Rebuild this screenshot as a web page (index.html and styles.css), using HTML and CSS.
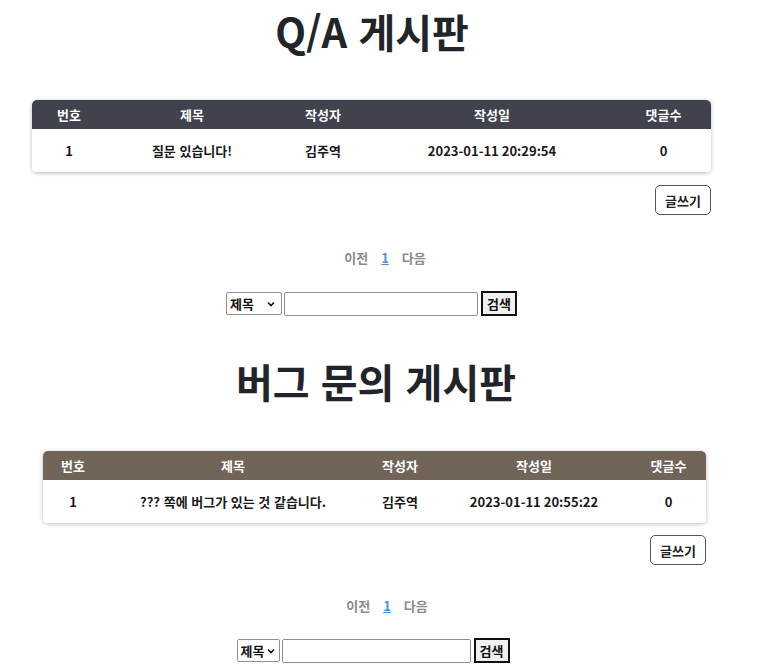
FILE: index.html
```html
<!DOCTYPE html>
<html lang="ko">
<head>
<meta charset="utf-8">
<title>게시판</title>
<link rel="stylesheet" href="styles.css">
</head>
<body>
<section class="board board-qa">
  <h1 class="board-title">Q/A 게시판</h1>
  <div class="board-body">
    <table class="board-table">
      <thead>
        <tr>
          <th class="c-no">번호</th>
          <th class="c-title">제목</th>
          <th class="c-writer">작성자</th>
          <th class="c-date">작성일</th>
          <th class="c-count">댓글수</th>
        </tr>
      </thead>
      <tbody>
        <tr>
          <td>1</td>
          <td>질문 있습니다!</td>
          <td>김주역</td>
          <td class="date">2023-01-11 20:29:54</td>
          <td>0</td>
        </tr>
      </tbody>
    </table>
    <div class="write-row"><button class="write-btn" type="button">글쓰기</button></div>
  </div>
  <nav class="pager"><span>이전</span><a href="#">1</a><span>다음</span></nav>
  <form class="search">
    <select class="search-select"><option>제목</option><option>작성자</option></select>
    <input class="search-input" type="text">
    <button class="search-btn" type="button">검색</button>
  </form>
</section>

<section class="board board-bug">
  <h1 class="board-title">버그 문의 게시판</h1>
  <div class="board-body">
    <table class="board-table">
      <thead>
        <tr>
          <th class="c-no">번호</th>
          <th class="c-title">제목</th>
          <th class="c-writer">작성자</th>
          <th class="c-date">작성일</th>
          <th class="c-count">댓글수</th>
        </tr>
      </thead>
      <tbody>
        <tr>
          <td>1</td>
          <td>??? 쪽에 버그가 있는 것 같습니다.</td>
          <td>김주역</td>
          <td class="date">2023-01-11 20:55:22</td>
          <td>0</td>
        </tr>
      </tbody>
    </table>
    <div class="write-row"><button class="write-btn" type="button">글쓰기</button></div>
  </div>
  <nav class="pager"><span>이전</span><a href="#">1</a><span>다음</span></nav>
  <form class="search">
    <select class="search-select"><option>제목</option></select>
    <input class="search-input" type="text">
    <button class="search-btn" type="button">검색</button>
  </form>
</section>
</body>
</html>
```
FILE: styles.css
```css
html, body {
  margin: 0;
  padding: 0;
  background: #ffffff;
}
body {
  width: 746px;
  font-family: "Noto Sans CJK KR", "Noto Sans", sans-serif;
  color: #212121;
}
.board {
  display: flex;
  flex-direction: column;
  height: 350px;
}
.board-title {
  margin: 0;
  font-size: 40px;
  font-weight: 700;
  line-height: 63px;
  text-align: center;
  color: #212529;
}
.board-qa .board-title { padding-right: 2px; }
.board-bug .board-title { padding-left: 6px; }
.board-body {
  display: flex;
  flex-direction: column;
  margin-top: 37px;
}
.board-qa .board-body { width: 679px; margin-left: 32px; }
.board-bug .board-body { width: 663px; margin-left: 43px; margin-top: 38px; }

.board-table {
  width: 100%;
  border-collapse: separate;
  border-spacing: 0;
  table-layout: fixed;
  border-radius: 5px;
  box-shadow: 0 1px 4px rgba(0, 0, 0, 0.28);
  font-size: 13px;
  font-weight: 700;
  text-align: center;
}
.board-table th {
  height: 29px;
  padding: 0;
  color: #ffffff;
  font-weight: 700;
}
.board-table th:first-child { border-top-left-radius: 5px; }
.board-table th:last-child { border-top-right-radius: 5px; }
.board-qa .board-table th { background: #40424c; }
.board-bug .board-table th { background: #716559; }
.board-table td {
  height: 43px;
  padding: 0;
  background: #ffffff;
  color: #1a1a1a;
}
.date {
  font-variant-east-asian: proportional-width;
  font-feature-settings: "locl" 0;
}
.board-table tbody tr:last-child td:first-child { border-bottom-left-radius: 4px; }
.board-table tbody tr:last-child td:last-child { border-bottom-right-radius: 4px; }

.board-qa .c-no { width: 74px; }
.board-qa .c-title { width: 172px; }
.board-qa .c-writer { width: 90px; }
.board-qa .c-date { width: 248px; }
.board-bug .c-no { width: 60px; }
.board-bug .c-title { width: 260px; }
.board-bug .c-writer { width: 74px; }
.board-bug .c-date { width: 194px; }

.write-row {
  display: flex;
  justify-content: flex-end;
  margin-top: 13px;
}
.board-bug .write-row { margin-top: 12px; }
.write-btn {
  width: 56px;
  height: 30px;
  padding: 0;
  background: #ffffff;
  border: 1px solid #555555;
  border-radius: 5px;
  font-family: "Noto Sans CJK KR", sans-serif;
  font-size: 13px;
  font-weight: 700;
  color: #222222;
}

.pager {
  display: flex;
  justify-content: center;
  gap: 13px;
  margin-top: 33px;
  padding-left: 24px;
  font-size: 13px;
  font-weight: 700;
  line-height: 19px;
  color: #8a8a8a;
}
.board-bug .pager { padding-left: 28px; margin-top: 31px; }
.pager a {
  color: #4f8ee0;
  text-decoration: underline;
}

.search {
  display: flex;
  justify-content: center;
  align-items: center;
  margin-top: 24px;
  padding-right: 3px;
}
.board-bug .search { padding-right: 0; margin-top: 23px; }
.search-select {
  appearance: none;
  -webkit-appearance: none;
  width: 56px;
  height: 23px;
  margin: 0 2px 0 0;
  padding: 0 0 0 3px;
  box-sizing: border-box;
  border: 1px solid #8f8f8f;
  border-radius: 2px;
  background: #ffffff url("data:image/svg+xml,%3Csvg xmlns='http://www.w3.org/2000/svg' width='8' height='6' viewBox='0 0 8 6'%3E%3Cpath d='M1 1.5l3 3 3-3' fill='none' stroke='%23111' stroke-width='1.6'/%3E%3C/svg%3E") no-repeat right 6px center;
  font-family: "Noto Sans CJK KR", sans-serif;
  font-size: 13px;
  font-weight: 700;
  color: #111111;
}
.board-bug .search-select { width: 43px; background-position: right 4px center; }
.search-input {
  width: 194px;
  height: 24px;
  margin: 0 3px 0 0;
  padding: 0;
  box-sizing: border-box;
  border: 1px solid #8f8f8f;
  border-radius: 2px;
}
.board-bug .search-input { width: 189px; }
.search-btn {
  width: 36px;
  height: 25px;
  margin: 0;
  padding: 0;
  box-sizing: border-box;
  border: 2px solid #111111;
  background: #f0f0f0;
  font-family: "Noto Sans CJK KR", sans-serif;
  font-size: 13px;
  font-weight: 700;
  color: #111111;
}
```
